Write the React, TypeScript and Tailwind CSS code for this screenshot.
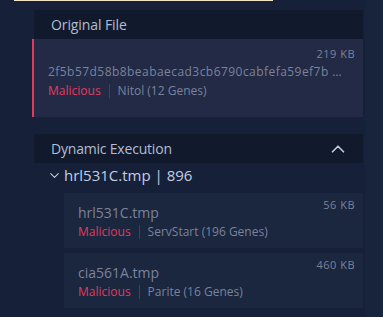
import { ChevronDown, ChevronUp } from "lucide-react";

const children = [
  { name: "hrl531C.tmp", size: "56 KB", family: "ServStart (196 Genes)" },
  { name: "cia561A.tmp", size: "460 KB", family: "Parite (16 Genes)" },
];

function Verdict({ family }: { family: string }) {
  return (
    <div className="flex items-center text-[12px] leading-[16px]">
      <span className="text-[#e23a5e]">Malicious</span>
      <span className="mx-[8px] h-[14px] w-px bg-[#39425e]" />
      <span className="text-[#7a839b]">{family}</span>
    </div>
  );
}

export default function App() {
  return (
    <div
      className="relative h-[317px] w-[383px] overflow-hidden bg-[#162139]"
      style={{ fontFamily: '"Open Sans", "Noto Sans", sans-serif' }}
    >
      <div className="absolute left-[14px] top-0 h-[1px] w-[259px] bg-[#f3e3c6]" />
      <div className="absolute right-0 top-0 h-full w-[18px] bg-[#18243b]" />

      <div className="ml-[32px] w-[331px] pt-[10px]">
        {/* original file */}
        <div className="ml-[2px] flex h-[29px] items-center bg-[#111a2d] pl-[17px] text-[14px] tracking-[-0.1px] text-[#b3bdd1]">
          Original File
        </div>
        <div className="h-[78px] border-l-2 border-[#e23a5e] bg-[#222a46] pl-[14px] pr-[8px] pt-[8px]">
          <div className="text-right text-[11px] leading-[14px] tracking-[0.5px] text-[#7a839b]">219 KB</div>
          <div className="mt-[3px] truncate text-[12px] leading-[16px] tracking-[0.45px] text-[#7a839b]">
            2f5b57d58b8beabaecad3cb6790cabfefa59ef7b …
          </div>
          <div className="mt-[3px]">
            <Verdict family="Nitol (12 Genes)" />
          </div>
        </div>

        {/* dynamic execution */}
        <div className="ml-[2px] mt-[17px] flex h-[29px] items-center justify-between bg-[#111a2d] pl-[17px] pr-[14px] text-[14px] tracking-[-0.2px] text-[#b3bdd1]">
          <span>Dynamic Execution</span>
          <ChevronUp size={22} strokeWidth={1.8} className="text-[#c4cde0]" />
        </div>
        <div className="ml-[15px] mt-[1px] flex h-[22px] items-center text-[15px] font-medium text-[#c4cde0]">
          <ChevronDown size={15} strokeWidth={1.8} className="mr-[2px]" />
          <span>hrl531C.tmp | 896</span>
        </div>

        <div className="ml-[32px] mt-[7px] flex flex-col gap-[5px]">
          {children.map((c) => (
            <div key={c.name} className="h-[55px] bg-[#1b263f] pl-[14px] pr-[8px] pt-[5px]">
              <div className="flex items-start justify-between">
                <span className="mt-[6px] text-[14px] leading-[18px] text-[#7a839b]">{c.name}</span>
                <span className="text-[11px] leading-[14px] tracking-[0.5px] text-[#7a839b]">{c.size}</span>
              </div>
              <div className="mt-[2px]">
                <Verdict family={c.family} />
              </div>
            </div>
          ))}
        </div>

        <div className="ml-[32px] mt-[4px] text-[15px] font-medium text-[#c4cde0]">hrl M887.tmp | 2012</div>
      </div>
    </div>
  );
}
